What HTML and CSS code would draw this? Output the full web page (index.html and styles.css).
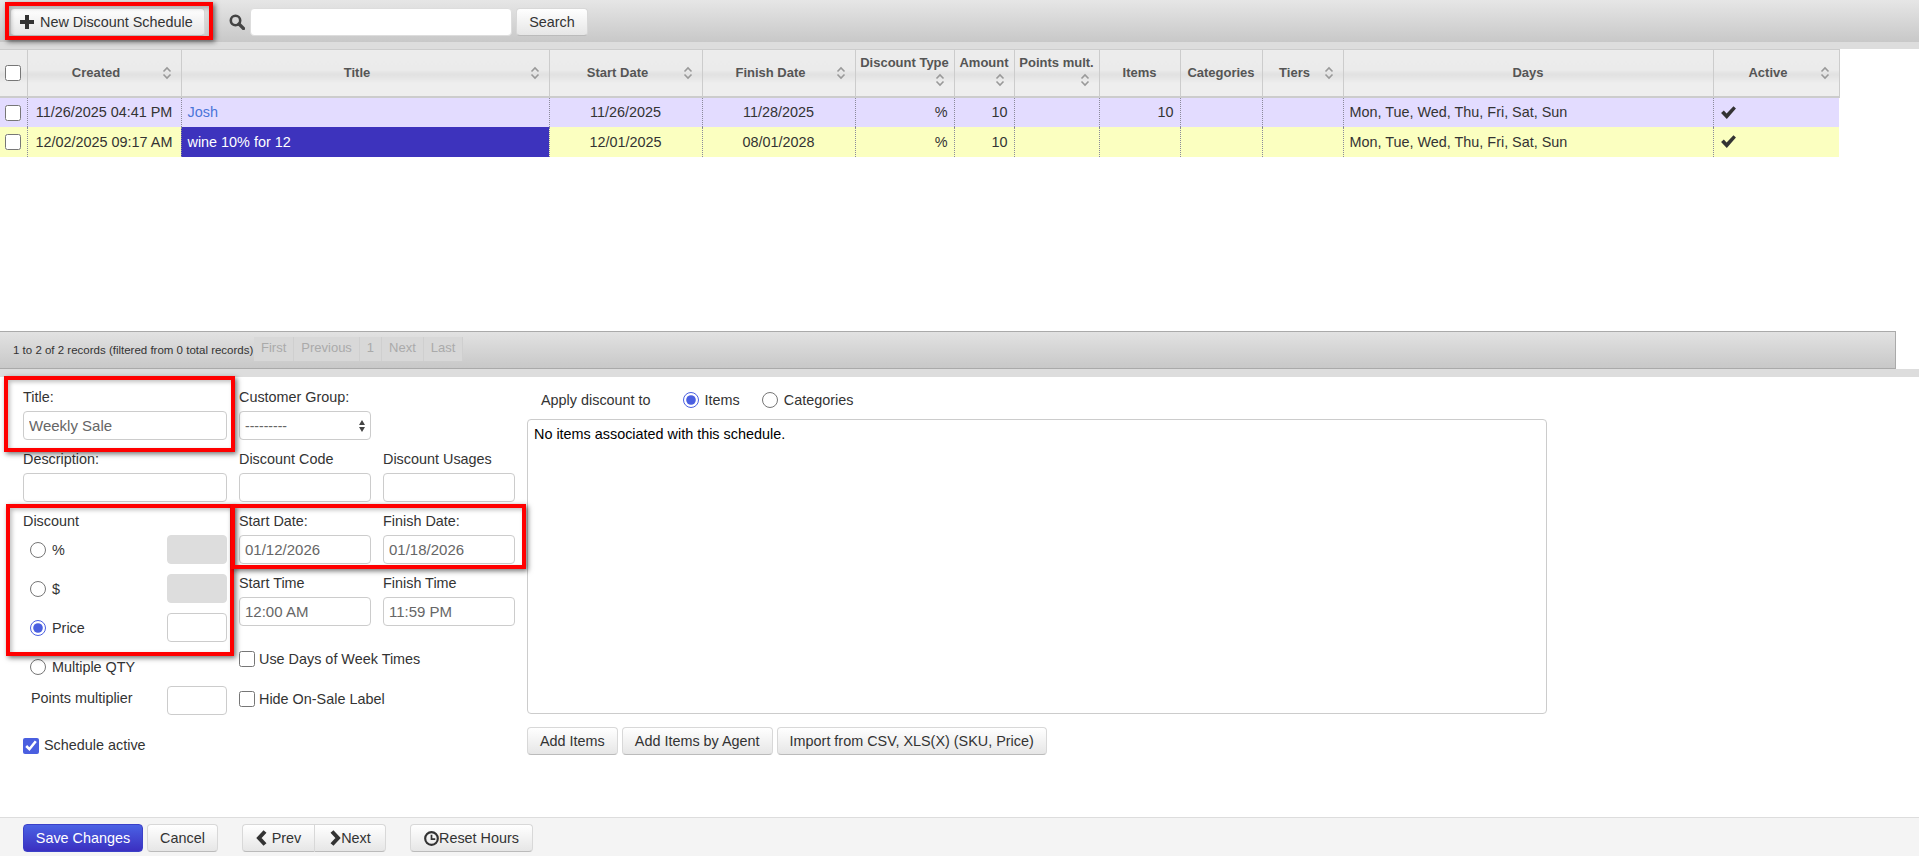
FILE: index.html
```html
<!DOCTYPE html>
<html lang="en">
<head>
   <meta charset="UTF-8">
   <title>Discount Schedules</title>
   <link rel="stylesheet" href="styles.css">
</head>
<body>

<div class="toolbar">
    <button class="btn btn-new">
        <svg class="icon" viewBox="0 0 14 14"><path d="M5 0h4v5h5v4H9v5H5V9H0V5h5z"/></svg>New Discount Schedule
    </button>
    <svg class="search-icon" viewBox="0 0 16 16"><circle cx="6.5" cy="6.5" r="4.7" fill="none" stroke="#444" stroke-width="2.6"/><path d="M10 10l4.5 4.5" stroke="#444" stroke-width="3.2" stroke-linecap="round"/></svg>
    <input type="text" class="search-input">
    <button class="btn btn-search">Search</button>
</div>
<div class="band band-top"></div>

<div class="table-wrap">
    <table class="grid">
        <colgroup>
            <col class="c-check"><col class="c-created"><col class="c-title"><col class="c-date"><col class="c-date">
            <col class="c-type"><col class="c-amount"><col class="c-points"><col class="c-items"><col class="c-cats">
            <col class="c-tiers"><col class="c-days"><col class="c-active">
        </colgroup>
        <thead>
            <tr>
                <th><input type="checkbox" class="chk"></th>
                <th><div class="th-in"><span class="th-text">Created</span><svg class="sort" viewBox="0 0 10 14"><path d="M1.5 5.5L5 2l3.5 3.5M1.5 8.5L5 12l3.5-3.5"/></svg></div></th>
                <th><div class="th-in"><span class="th-text">Title</span><svg class="sort" viewBox="0 0 10 14"><path d="M1.5 5.5L5 2l3.5 3.5M1.5 8.5L5 12l3.5-3.5"/></svg></div></th>
                <th><div class="th-in"><span class="th-text">Start Date</span><svg class="sort" viewBox="0 0 10 14"><path d="M1.5 5.5L5 2l3.5 3.5M1.5 8.5L5 12l3.5-3.5"/></svg></div></th>
                <th><div class="th-in"><span class="th-text">Finish Date</span><svg class="sort" viewBox="0 0 10 14"><path d="M1.5 5.5L5 2l3.5 3.5M1.5 8.5L5 12l3.5-3.5"/></svg></div></th>
                <th><div class="th-in"><span class="th-text">Discount Type</span><svg class="sort" viewBox="0 0 10 14"><path d="M1.5 5.5L5 2l3.5 3.5M1.5 8.5L5 12l3.5-3.5"/></svg></div></th>
                <th><div class="th-in"><span class="th-text">Amount</span><svg class="sort" viewBox="0 0 10 14"><path d="M1.5 5.5L5 2l3.5 3.5M1.5 8.5L5 12l3.5-3.5"/></svg></div></th>
                <th><div class="th-in"><span class="th-text">Points mult.</span><svg class="sort" viewBox="0 0 10 14"><path d="M1.5 5.5L5 2l3.5 3.5M1.5 8.5L5 12l3.5-3.5"/></svg></div></th>
                <th>Items</th>
                <th>Categories</th>
                <th><div class="th-in"><span class="th-text">Tiers</span><svg class="sort" viewBox="0 0 10 14"><path d="M1.5 5.5L5 2l3.5 3.5M1.5 8.5L5 12l3.5-3.5"/></svg></div></th>
                <th>Days</th>
                <th><div class="th-in"><span class="th-text">Active</span><svg class="sort" viewBox="0 0 10 14"><path d="M1.5 5.5L5 2l3.5 3.5M1.5 8.5L5 12l3.5-3.5"/></svg></div></th>
            </tr>
        </thead>
        <tbody>
            <tr class="row-lilac">
                <td class="mid"><input type="checkbox" class="chk"></td>
                <td class="mid">11/26/2025 04:41 PM</td>
                <td><a href="#" class="link">Josh</a></td>
                <td class="mid">11/26/2025</td>
                <td class="mid">11/28/2025</td>
                <td class="num">%</td>
                <td class="num">10</td>
                <td></td>
                <td class="num">10</td>
                <td></td>
                <td></td>
                <td>Mon, Tue, Wed, Thu, Fri, Sat, Sun</td>
                <td><svg class="tick" viewBox="0 0 16 14"><path d="M1 7.5l2.6-2.4 2.6 2.8L12.7 1 15 3.3 6.4 13z"/></svg></td>
            </tr>
            <tr class="row-yellow">
                <td class="mid"><input type="checkbox" class="chk"></td>
                <td class="mid">12/02/2025 09:17 AM</td>
                <td class="picked">wine 10% for 12</td>
                <td class="mid">12/01/2025</td>
                <td class="mid">08/01/2028</td>
                <td class="num">%</td>
                <td class="num">10</td>
                <td></td>
                <td></td>
                <td></td>
                <td></td>
                <td>Mon, Tue, Wed, Thu, Fri, Sat, Sun</td>
                <td><svg class="tick" viewBox="0 0 16 14"><path d="M1 7.5l2.6-2.4 2.6 2.8L12.7 1 15 3.3 6.4 13z"/></svg></td>
            </tr>
        </tbody>
    </table>
</div>

<div class="pager">
    <span class="pager-info">1 to 2 of 2 records (filtered from 0 total records)</span>
    <span class="pg">First</span><span class="pg">Previous</span><span class="pg">1</span><span class="pg">Next</span><span class="pg">Last</span>
</div>
<div class="band"></div>

<div class="editor">
    <div class="col-left">
        <div class="field">
            <label>Title:</label>
            <input type="text" value="Weekly Sale">
        </div>
        <div class="field">
            <label>Description:</label>
            <input type="text">
        </div>
        <label class="field-label">Discount</label>
        <div class="disc-row"><label class="radio"><input type="radio" name="disc">%</label><input type="text" class="short" disabled></div>
        <div class="disc-row"><label class="radio"><input type="radio" name="disc">$</label><input type="text" class="short" disabled></div>
        <div class="disc-row"><label class="radio"><input type="radio" name="disc" checked>Price</label><input type="text" class="short"></div>
        <div class="disc-row disc-multi"><label class="radio"><input type="radio" name="disc">Multiple QTY</label></div>
        <div class="disc-row"><span class="points">Points multiplier</span><input type="text" class="short"></div>
        <label class="check check-active"><input type="checkbox" class="chk" checked>Schedule active</label>
    </div>

    <div class="col-mid">
        <div class="field field-wide">
            <label>Customer Group:</label>
            <div class="select-wrap">
                <select><option>---------</option></select>
            </div>
        </div>
        <div class="field"><label>Discount Code</label><input type="text"></div>
        <div class="field"><label>Discount Usages</label><input type="text"></div>
        <div class="field"><label>Start Date:</label><input type="text" value="01/12/2026"></div>
        <div class="field"><label>Finish Date:</label><input type="text" value="01/18/2026"></div>
        <div class="field"><label>Start Time</label><input type="text" value="12:00 AM"></div>
        <div class="field"><label>Finish Time</label><input type="text" value="11:59 PM"></div>
        <label class="check check-days"><input type="checkbox" class="chk">Use Days of Week Times</label>
        <label class="check check-hide"><input type="checkbox" class="chk">Hide On-Sale Label</label>
    </div>

    <div class="col-items">
        <div class="apply">
            <span class="apply-label">Apply discount to</span>
            <label class="radio"><input type="radio" name="apply" checked>Items</label>
            <label class="radio"><input type="radio" name="apply">Categories</label>
        </div>
        <div class="items-box">No items associated with this schedule.</div>
        <div class="items-btns">
            <button class="btn">Add Items</button>
            <button class="btn">Add Items by Agent</button>
            <button class="btn">Import from CSV, XLS(X) (SKU, Price)</button>
        </div>
    </div>
</div>

<div class="footer">
    <button class="btn btn-save">Save Changes</button>
    <button class="btn btn-cancel">Cancel</button>
    <div class="btn-group">
        <button class="btn btn-prev"><svg class="icon-nav" viewBox="0 0 12 16"><path d="M9 1.5L3 8l6 6.5" /></svg>Prev</button>
        <button class="btn btn-next"><svg class="icon-nav" viewBox="0 0 12 16"><path d="M3 1.5L9 8l-6 6.5" /></svg>Next</button>
    </div>
    <button class="btn btn-reset"><svg class="icon-clock" viewBox="0 0 14 14"><circle cx="7" cy="7" r="5.9" fill="none" stroke="#333" stroke-width="2"/><path d="M7 3.5V7.5H10.5" fill="none" stroke="#333" stroke-width="1.6"/></svg>Reset Hours</button>
</div>

<div class="mark mark-new"></div>
<div class="mark mark-title"></div>
<div class="mark mark-discount"></div>
<div class="mark mark-dates"></div>

</body>
</html>
```

FILE: styles.css
```css
html, body {
    height: 100%;
}

body {
    margin: 0;
    position: relative;
    display: flex;
    flex-direction: column;
    overflow: hidden;
    background: white;
    font-family: "Liberation Sans", Arial, sans-serif;
    font-size: 14.4px;
    color: #333;
}

/* buttons */
.btn {
    height: 28px;
    padding: 0 12px;
    font-family: inherit;
    font-size: 14.4px;
    color: #333;
    background: linear-gradient(#ffffff, #e6e6e6);
    border: 1px solid #d8d8d8;
    border-bottom-color: #bbb;
    border-radius: 4px;
    white-space: nowrap;
}

/* top bar */
.toolbar {
    height: 42px;
    box-sizing: border-box;
    padding: 8px 0 0 10px;
    display: flex;
    align-items: flex-start;
    background: linear-gradient(#e6e6e6, #c8c8c8);
}

.band {
    height: 8px;
    background: #ddd;
}

.band-top {
    height: 7px;
}

.btn-new {
    width: 195px;
    padding: 0 0 0 9px;
    display: flex;
    align-items: center;
}

.icon {
    width: 14px;
    height: 14px;
    margin-right: 6px;
    fill: #333;
}

.search-icon {
    width: 16px;
    height: 16px;
    margin: 6px 5px 0 24px;
}

.search-input {
    width: 262px;
    height: 28px;
    box-sizing: border-box;
    border: 1px solid #ddd;
    border-radius: 4px;
}

.btn-search {
    width: 72px;
    margin-left: 4px;
    padding: 0;
}

/* table */
.table-wrap {
    height: 282px;
}

.grid {
    width: 1839px;
    table-layout: fixed;
    border-collapse: collapse;
    font-size: 14.4px;
}

.c-check { width: 27px; }
.c-created { width: 154px; }
.c-title { width: 368px; }
.c-date { width: 153px; }
.c-type { width: 99px; }
.c-amount { width: 60px; }
.c-points { width: 85px; }
.c-items { width: 81px; }
.c-cats { width: 82px; }
.c-tiers { width: 81px; }
.c-days { width: 370px; }
.c-active { width: 126px; }

.grid th {
    height: 47px;
    box-sizing: border-box;
    padding: 0 3px;
    font-size: 13px;
    color: #555;
    font-weight: bold;
    text-align: center;
    background: linear-gradient(#ececec 0, #ebebeb 42%, #e1e1e1 52%, #eeeeee 72%);
    border: 1px solid #ccc;
    border-bottom-width: 2px;
}

.grid th:first-child {
    border-left: 0;
}

.th-in {
    display: flex;
    flex-wrap: wrap;
    align-items: center;
}

.th-text {
    flex: 1 1 auto;
    white-space: nowrap;
}

.sort {
    width: 10px;
    height: 14px;
    margin: 3px 6px 3px auto;
    fill: none;
    stroke: #999;
    stroke-width: 1.6;
}

.grid td {
    height: 30px;
    box-sizing: border-box;
    padding: 0 6px;
    border-left: 1px dotted #8a8a9a;
    white-space: nowrap;
}

.grid td:first-child {
    border-left: 0;
    padding: 0;
}

.row-lilac td { background: #e3dcff; }
.row-yellow td { background: #fbffc0; }

.grid td.mid { text-align: center; }
.grid td.num { text-align: right; }

.grid td.picked {
    background: #3d33bd;
    color: white;
}

.link {
    color: #4a75d9;
    text-decoration: none;
}

.chk {
    width: 16px;
    height: 16px;
    margin: 0;
    vertical-align: middle;
    accent-color: #4a5fe0;
}

.tick {
    width: 17px;
    height: 15px;
    display: block;
    fill: #333;
}

/* pager */
.pager {
    height: 38px;
    width: 1896px;
    box-sizing: border-box;
    padding: 5px 0 0 13px;
    display: flex;
    align-items: flex-start;
    background: linear-gradient(#e2e2e2, #c8c8c8);
    border: 1px solid #aaa;
    border-left: 0;
}

.pager-info {
    width: 241px;
    height: 24px;
    line-height: 26px;
    font-size: 11.5px;
    color: #333;
    white-space: nowrap;
}

.pg {
    height: 24px;
    line-height: 22px;
    padding: 0 7px;
    font-size: 13px;
    color: #aaa;
    background: #d8d8d8;
    border-right: 1px solid #cfcfcf;
}

/* form */
.editor {
    flex: 1;
    display: flex;
    padding: 10px 0 0 23px;
}

.col-left {
    width: 204px;
    margin-right: 12px;
}

.col-mid {
    width: 276px;
    margin-right: 12px;
    display: grid;
    grid-template-columns: 132px 132px;
    column-gap: 12px;
    align-content: start;
}

.field {
    margin-bottom: 9px;
}

.field-wide {
    grid-column: 1 / 3;
}

.field label, .field-label {
    display: block;
    height: 20px;
    line-height: 20px;
    margin-bottom: 4px;
    white-space: nowrap;
}

.editor input[type="text"], .editor select {
    display: block;
    width: 100%;
    height: 29px;
    box-sizing: border-box;
    padding: 0 5px;
    font-family: inherit;
    font-size: 15px;
    color: #666;
    background: white;
    border: 1px solid #ccc;
    border-radius: 4px;
}

.editor input.short {
    width: 60px;
}

.editor input.short:disabled {
    background: #ddd;
    border-color: #ddd;
}

.select-wrap {
    position: relative;
    width: 132px;
}

.editor select {
    appearance: none;
    font-size: 14px;
}

.select-wrap::before, .select-wrap::after {
    content: "";
    position: absolute;
    right: 6px;
    border-left: 3.5px solid transparent;
    border-right: 3.5px solid transparent;
}

.select-wrap::before {
    top: 9px;
    border-bottom: 5px solid #444;
}

.select-wrap::after {
    top: 16px;
    border-top: 5px solid #444;
}

.disc-row {
    display: flex;
    align-items: center;
    justify-content: space-between;
    height: 29px;
    margin-bottom: 10px;
}

.disc-multi {
    margin-bottom: 5px;
}

.radio {
    display: inline-flex;
    align-items: center;
    white-space: nowrap;
}

.radio input {
    width: 16px;
    height: 16px;
    margin: 0 6px 0 7px;
    accent-color: #4a5fe0;
}

.points {
    margin: 0 0 6px 8px;
    white-space: nowrap;
}

.check {
    display: flex;
    align-items: center;
    white-space: nowrap;
}

.check .chk {
    margin-right: 4px;
}

.check-active {
    margin-top: 20px;
}

.check-active .chk {
    margin: 3px 5px 0 0;
}

.check-days {
    grid-column: 1 / 3;
    margin-top: 14px;
    height: 20px;
}

.check-hide {
    grid-column: 1 / 3;
    margin-top: 20px;
    height: 20px;
}

.col-items {
    width: 1020px;
}

.apply {
    height: 22px;
    margin: 2px 0 8px;
    padding-left: 14px;
    display: flex;
    align-items: center;
}

.apply-label {
    margin-right: 32px;
}

.apply .radio input {
    margin-left: 0;
}

.apply .radio {
    margin-right: 22px;
}

.items-box {
    height: 295px;
    box-sizing: border-box;
    padding: 6px 6px;
    color: black;
    border: 1px solid #ccc;
    border-radius: 4px;
}

.items-btns {
    margin-top: 13px;
    display: flex;
    gap: 4px;
}

/* footer */
.footer {
    height: 39px;
    box-sizing: border-box;
    padding: 6px 0 0 23px;
    display: flex;
    background: #f4f4f4;
    border-top: 1px solid #ddd;
}

.btn-save {
    width: 120px;
    padding: 0;
    color: white;
    background: linear-gradient(#4a62e4, #3b2fc0);
    border-color: #3b40c8;
}

.btn-cancel {
    width: 71px;
    margin-left: 4px;
    padding: 0;
}

.btn-group {
    margin-left: 24px;
    display: flex;
}

.btn-prev, .btn-next {
    width: 72px;
    padding: 0;
    display: flex;
    align-items: center;
    justify-content: center;
}

.btn-prev {
    border-radius: 4px 0 0 4px;
    border-right: 0;
}

.btn-next {
    border-radius: 0 4px 4px 0;
}

.icon-nav {
    width: 12px;
    height: 16px;
    fill: none;
    stroke: #333;
    stroke-width: 4;
}

.btn-prev .icon-nav {
    margin-right: 4px;
}

.btn-reset {
    width: 123px;
    margin-left: 24px;
    padding: 0;
    display: flex;
    align-items: center;
    justify-content: center;
}

.icon-clock {
    width: 15px;
    height: 15px;
}

/* red annotation boxes drawn on top of the page */
.mark {
    position: absolute;
    box-sizing: border-box;
    border: 4px solid #f00;
    box-shadow: 2px 2px 5px rgba(0,0,0,0.55), inset 2px 2px 4px rgba(0,0,0,0.25);
    pointer-events: none;
}

.mark-new { left: 5px; top: 2px; width: 208px; height: 38px; }
.mark-title { left: 4px; top: 376px; width: 231px; height: 76px; }
.mark-discount { left: 6px; top: 504px; width: 228px; height: 152px; }
.mark-dates { left: 231px; top: 504px; width: 295px; height: 65px; }
```
